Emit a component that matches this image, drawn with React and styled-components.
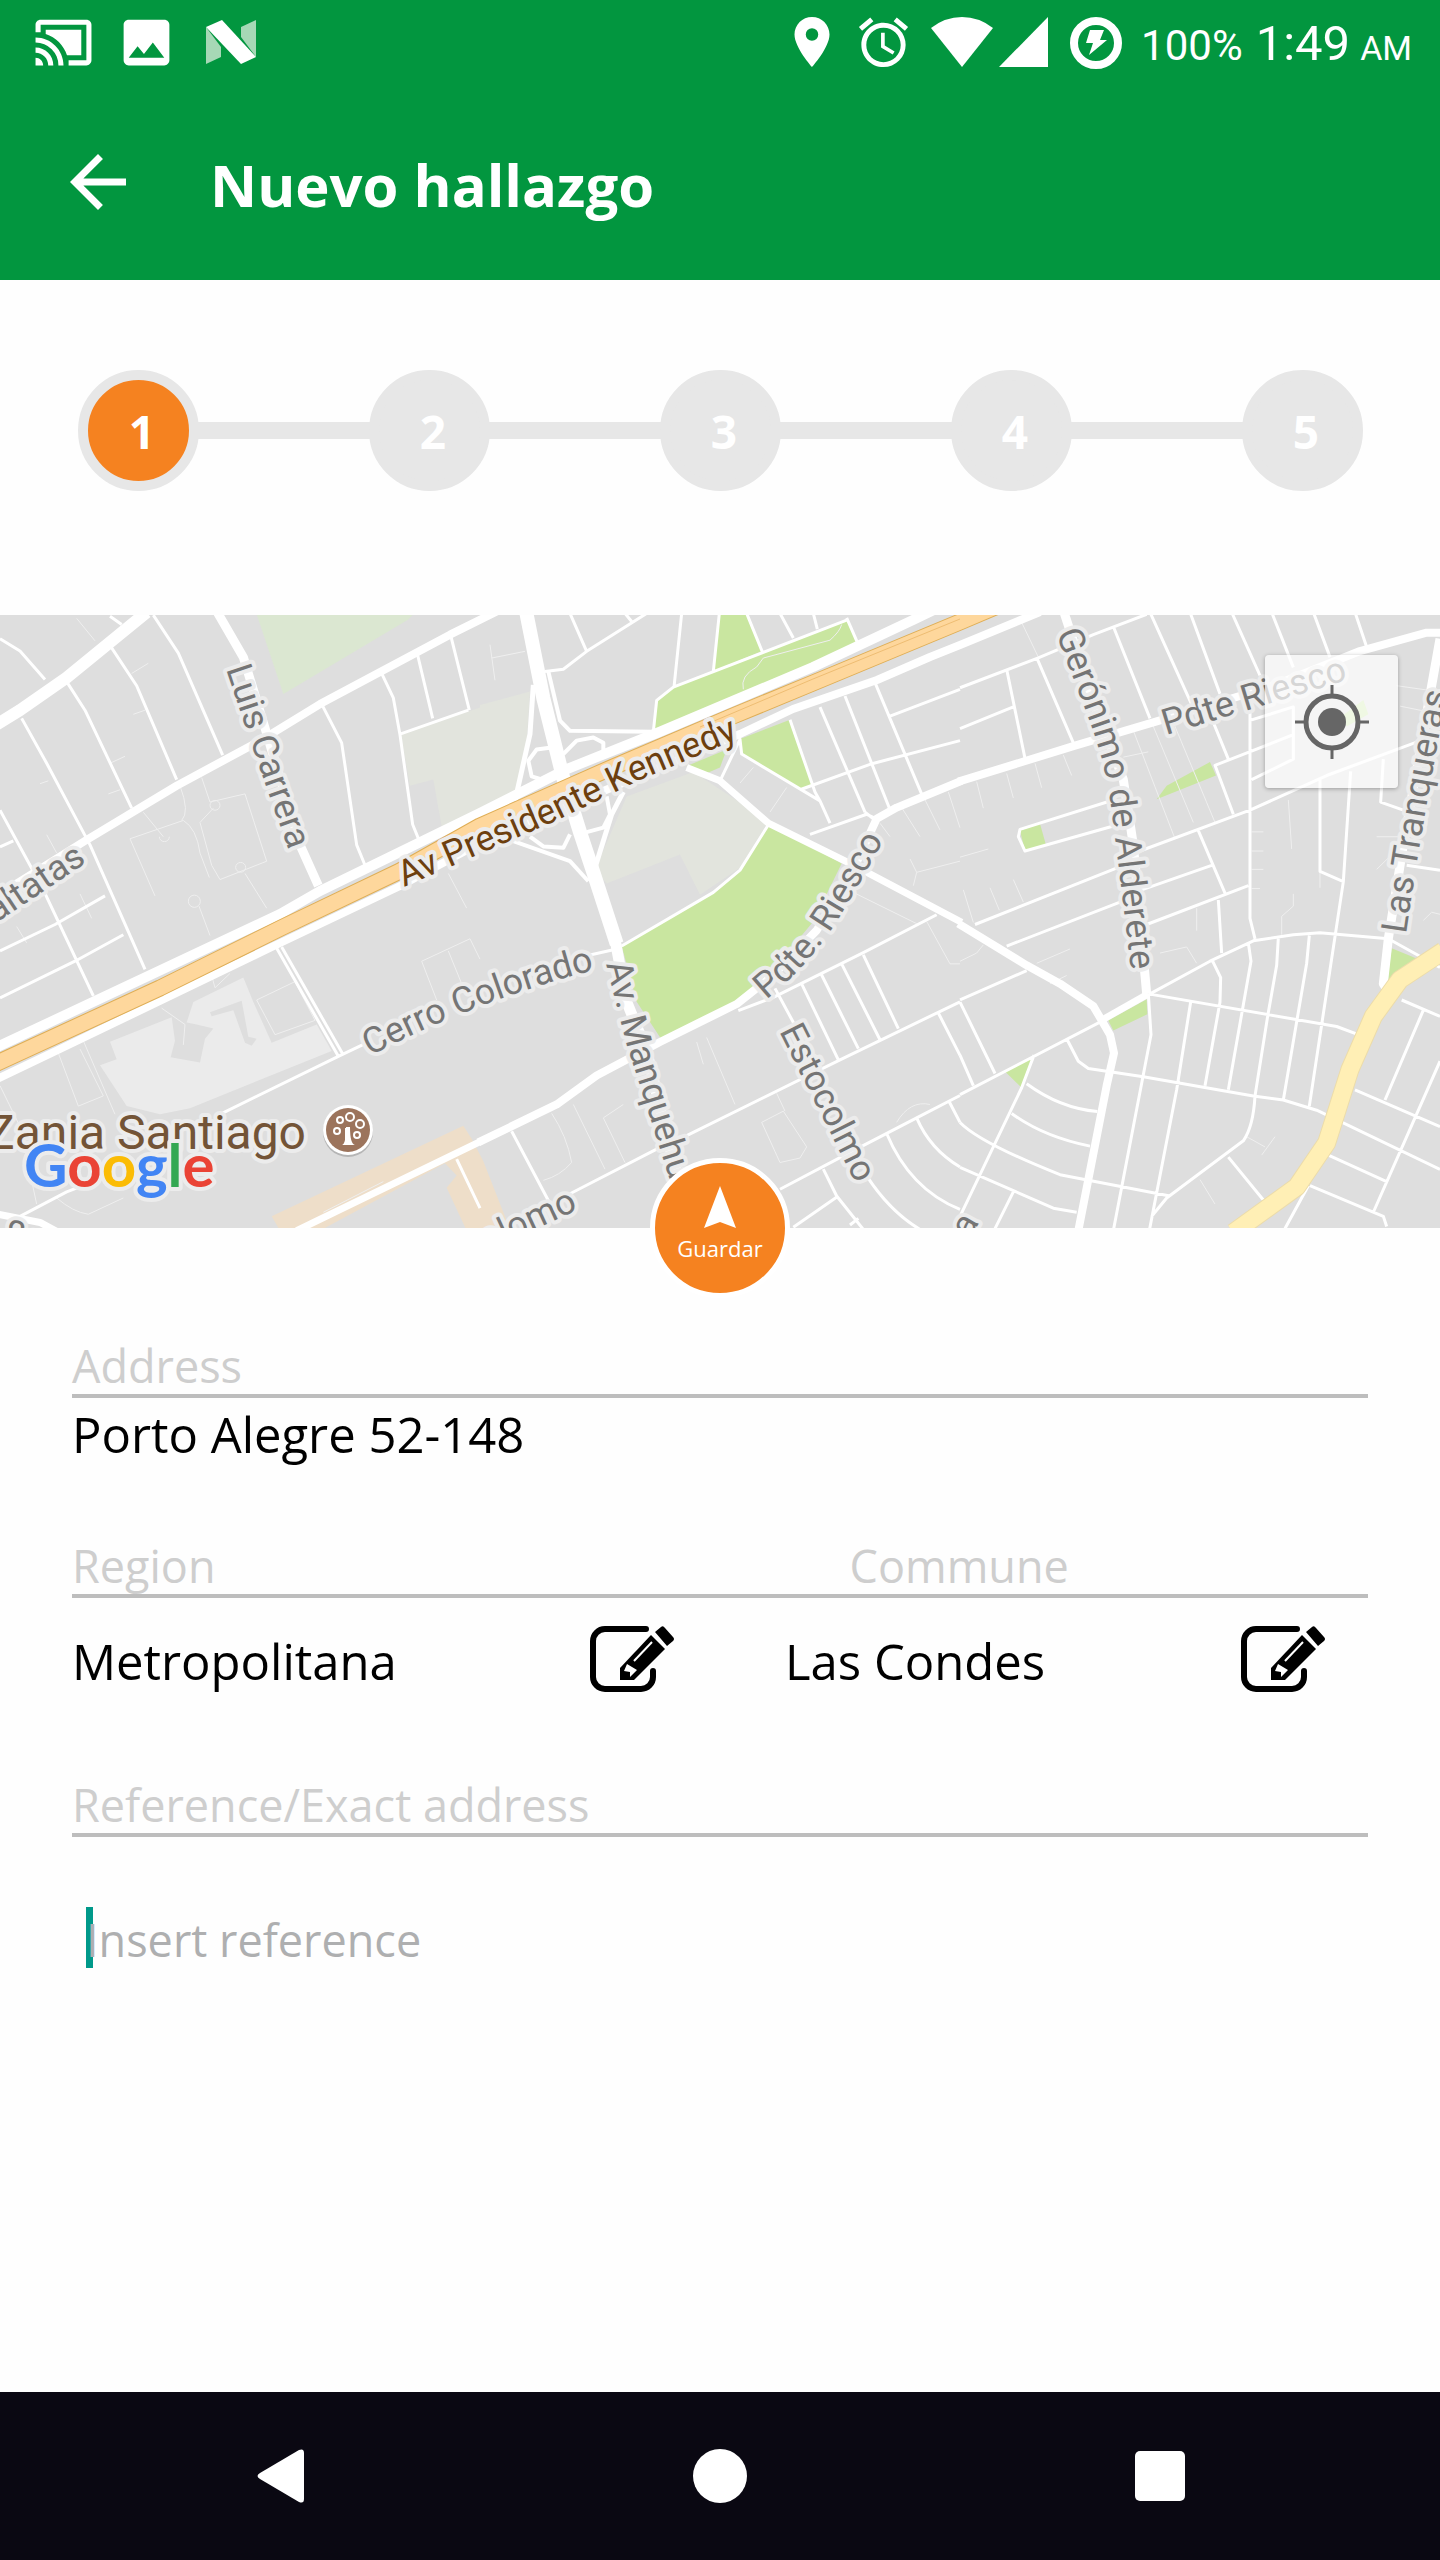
import React, { useState } from "react";
import styled, { createGlobalStyle } from "styled-components";
import {
  MdAccessAlarm,
  MdArrowBack,
  MdCastConnected,
  MdImage,
  MdLocationOn,
} from "react-icons/md";

const steps = [1, 2, 3, 4, 5];

// Every tile holds its own street coordinates, placed on the map by "transform"
const mapTiles = [
  {
    id: "west",
    transform: "translate(0 -15) scale(0.33333 0.40816)",
    areas: [
      ["#dbe7d1", "M768 30H1245L1225 48L850 230Z"],
      ["#e2e4dd", "M1202 328L1445 262V528L1325 555L1300 440L1230 455Z"],
      [
        "#ebebeb",
        "M300 1140L350 1125L330 1082L515 1022L525 1080L512 1120L600 1133L615 1075L640 1050L590 1040L560 1035L580 985L730 925L760 985L815 1085L950 1040L995 1105L570 1245L480 1260L380 1240Z",
      ],
      ["#dedede", "M630 1010L725 982L745 1070L770 1075L755 1092L735 1085L700 1005L635 1020Z"],
      [
        "#eedec9",
        "M815 1510L1390 1288L1415 1320L1450 1375L1525 1531V1545H1400L1340 1440L1370 1410L1335 1380L960 1545H840Z",
      ],
    ],
    faint:
      "M230 45L285 100M395 180L445 155M400 280L435 270M330 400L375 383M325 475L360 465M120 450L145 443M390 585L550 540Q590 560 600 620L628 680M390 585L465 725M540 455Q570 520 545 540M430 520L490 580M605 435L630 495L735 475L800 640L660 685L635 650L600 545L640 510M630 503a15 12 0 1 0 30 0a15 12 0 1 0-30 0M707 655a15 12 0 1 0 30 0a15 12 0 1 0-30 0M565 738a18 15 0 1 0 36 0a18 15 0 1 0-36 0M478 580a15 12 0 1 0 30 0M735 670L800 755M597 750L630 822M175 1110L235 1240L310 1215L240 1100M250 1080L345 1260M0 1190L60 1290L110 1480M1345 670L1400 755M1265 885L1410 830L1440 880M1265 885L1310 980M1345 860L1390 950M770 980L885 935L945 1030L825 1065ZM970 1500L1150 1425M170 1465Q220 1500 265 1505L370 1465M140 575L170 620M50 800L80 840M240 720L275 780M485 1000L555 1040L550 1090M635 920L645 950L690 915",
    minor:
      "M0 95L60 125L135 195M325 105L410 210L530 440M200 200L255 270L395 510M65 290L140 400L270 600L435 905M460 37L535 130L668 380M0 515L130 710L280 970M0 605L40 590M0 860L165 795L315 725M0 975L225 885L370 820M330 40L365 60M965 255L1025 350L1070 600L1095 650M1145 180L1180 240L1200 330L1238 550L1258 590M1202 328L1405 270M1250 125L1298 290M1350 80L1408 270M828 850L1015 1118M845 850L1030 1115M660 1260L1015 1118L1100 1085M1370 1370L1440 1490M60 1510L200 1450L280 1425",
    main: [
      [12, "M-10 305L60 270L200 190L440 30"],
      [8, "M1510 20L1350 85L960 255L780 345L530 455L255 590L0 720"],
      [9, "M652 30L730 140L790 300L900 600L955 700"],
      [7, "M890 1545L1445 1325"],
      [7, "M-5 1505L120 1525L200 1560"],
    ],
  },
  {
    id: "center",
    transform: "translate(480 -15) scale(0.33333 0.44643)",
    areas: [
      ["#c9e6a0", "M718 30H800L845 115L697 160Z"],
      ["#c9e6a0", "M530 225L580 195L1100 45L1135 100L700 240L520 290Z"],
      ["#c9e6a0", "M778 312L930 268L1000 412L960 425L785 345Z"],
      ["#c9e6a0", "M620 372L740 335L720 375L680 388Z"],
      [
        "#c9e6a0",
        "M868 500L1085 590L1000 720L900 810L780 895L545 985L470 900L425 775L700 655L780 605Z",
      ],
      ["#e2e4dd", "M0 235L150 205L140 320L105 440L0 470Z"],
      ["#e2e4dd", "M440 440L640 385L865 495L780 600L660 660L600 570L380 635L345 605Z"],
    ],
    faint:
      "M30 100L45 180M35 130L135 115M790 200Q780 170 830 150L850 130L1050 90Q1080 70 1085 55M780 410L820 375M870 475L920 420M1265 465L1320 530M1330 440L1380 515M1405 430L1440 510M1200 500L1230 530M1290 580L1310 610L1440 585M1310 610L1300 640M1120 655L1310 725M1340 720L1410 815H1440M650 990L670 1040M680 980L765 1130M845 1170L910 1145L980 1225L960 1250L900 1260ZM370 1160L430 1130M370 1160L435 1260M215 1150Q260 1200 275 1260Q240 1290 190 1300M280 1130L375 1275M890 1105L915 1145M1250 1170Q1290 1120 1350 1130",
    minor:
      "M700 160L718 30M582 195L605 30M520 295L530 225L580 195L1100 45M1100 40L1135 100M800 30L848 118M900 30L940 85M1000 30L1012 65M195 160L250 155L320 115L500 30M270 30L320 115M435 30L455 48M425 775L700 655L780 605L868 500M720 405L780 312L785 345L1020 450L1050 500M930 268L1005 430L1020 450M960 425L1170 368L1440 315M1020 240L1155 475M1095 215L1230 470M1185 185L1325 435M1230 260L1440 200M990 525L1160 480L1190 490M1155 475L1180 490M330 795L420 780M775 920L880 890L1150 790L1370 705M885 870L950 960M965 860L1075 1030M1025 840L1135 1005M1085 815L1200 985M1150 795L1255 960M620 1200L1080 1030L1440 900M1375 925L1440 1020M900 1320L1090 1245L1310 1160L1440 1110M95 1190L205 1345M270 1330L530 1230M1310 1160Q1350 1230 1440 1270M1220 1195Q1290 1320 1440 1365M1160 1290Q1230 1370 1320 1410M1030 1275L1070 1335L1150 1410M940 1405L1075 1335M1110 1400L1135 1385M1405 1120L1440 1170",
    main: [
      [5, "M160 190L150 300L105 450"],
      [4, "M205 160L240 270L270 293L520 295"],
      [4, "M250 345L290 315L340 308L370 320L370 345L340 360L280 375"],
      [4, "M220 330L170 335L145 360L155 395L200 405"],
      [5, "M430 430L395 480L345 600"],
      [4, "M380 440L390 480L370 510L320 520"],
      [4, "M150 530L190 552L250 555L270 525"],
      [4, "M100 540L270 585L325 630"],
      [14, "M138 25L190 220L250 400L300 520L340 610L410 770"],
      [11, "M405 760L440 900L500 1010L560 1200L600 1310"],
      [
        8,
        "M-5 1215L230 1130L350 1065L540 990L770 905L880 840L1010 740L1110 620L1190 490L1250 465L1445 405",
      ],
      [7, "M620 375L720 405L865 500L1110 590L1445 722"],
    ],
  },
  {
    id: "east",
    transform: "translate(960 -15) scale(0.33333 0.40816)",
    areas: [
      ["#c9e6a0", "M180 565L240 548L258 600L195 615Z"],
      ["#c9e6a0", "M590 488L620 455L750 397L768 430Z"],
      ["#c9e6a0", "M445 1030L560 978L562 1015L460 1055Z"],
      ["#c9e6a0", "M135 1155L220 1118L185 1195Z"],
      ["#c9e6a0", "M1295 853L1390 885L1295 955L1283 930Z"],
      ["#c9e6a0", "M1145 285L1210 245L1225 280L1160 310Z"],
    ],
    faint:
      "M185 55L235 140M50 445L70 510M140 425L160 485M225 400L245 460M310 380L335 430M490 385L565 372M520 320L645 585M575 300L700 545M0 630L85 610M10 710L40 790M90 705L118 760M160 685L190 740M985 490L995 610M875 568H910M875 615H910M875 660H910M875 707H900M1000 720V750L965 775V820M1080 665V705M600 865L680 850L710 890M230 890L330 855M270 940L320 920M710 755V810M1250 580H1320M1250 660L1300 620M860 1315L915 1340M945 1315L905 1360M720 1420L765 1480M1310 210L1440 225M1320 260L1440 280M1390 785L1415 765L1440 770M0 885L50 865L70 845M640 300L765 545",
    minor:
      "M0 215L235 142L400 85L560 35M0 315L160 262M140 170L195 388M232 145L340 350M460 65L570 290M570 30L700 265M690 30L780 230M750 280L805 390M815 30L900 185M935 30L1000 165M1060 30L1110 140M1185 30L1220 115M460 490L180 562L175 580L195 615L455 555M45 795L475 655M540 615L870 515L1100 430L1380 345M140 848L480 740M545 710L755 650M560 795L865 700M715 565L795 718M870 250V780L885 830M820 525L765 405L1000 330M870 295L1000 262V390L875 440M1080 440V665L1150 690M1172 420L1150 690L1048 1240M1270 390L1262 495L1330 515M1340 650L1440 662M0 980L200 908M570 965L750 885L880 835L1000 820L1080 815L1285 830L1440 900M565 965L1130 1045L1205 1068M565 965L573 1065L460 1545M692 985L650 1200L568 1545M775 735L785 865M755 880L782 925L780 985L735 1190M865 840L873 885L805 1200M955 828L950 895L923 1020L885 1215Q880 1290 850 1325L620 1465L575 1510M1048 822L1040 890L970 1225M320 1075L355 1130L385 1148L550 1168L880 1215L970 1225L1070 1250L1440 1395M0 1212L430 1030M0 985L105 1160M0 1115L40 1190M222 1115L185 1195L0 1510M200 1185Q300 1245 412 1253M155 1258Q250 1315 390 1338M0 1280Q60 1330 300 1408L630 1460M0 1390L280 1490L350 1500M160 1450L105 1540M1185 1200L1440 1290M1325 980L1440 1020M1390 1005L1275 1225M1440 1130L1240 1500M1105 1360L1280 1425M1050 1435L1270 1510L1280 1535M1045 1435L975 1540M805 1365L915 1475",
    main: [
      [8, "M-5 445L340 358L600 295L940 210L1200 125L1400 80H1445"],
      [9, "M310 25L400 250L490 440L520 600L560 965"],
      [8, "M-5 793L200 895L300 940L400 995L450 1065L462 1110L440 1190L355 1545"],
      [7, "M430 1027L565 965"],
      [9, "M1440 95L1330 600L1285 830L1270 940L1290 965"],
    ],
  },
];

const highway =
  "M-5 449L160 373L283 312L400 256L480 211L613 152L733 101L813 68L960 7L1000 -10";

// Street names follow these baselines
const streetLabels = [
  { id: "carrera", name: "Luis Carrera", d: "M226 54L256 143L294 250" },
  { id: "altatas", name: "altatas", d: "M-4 308L110 232" },
  { id: "colorado", name: "Cerro Colorado", d: "M370 441Q480 383 610 351" },
  { id: "manquehue", name: "Av. Manquehu", d: "M606 349L626 427L653 512L683 607" },
  { id: "pdteriesco", name: "Pdte. Riesco", d: "M766 385Q812 348 842 298T895 203" },
  { id: "estocolmo", name: "Estocolmo", d: "M779 416L860 577" },
  { id: "geronimo", name: "Gerónimo de Alderete", d: "M1056 18C1077 77 1104 130 1111 192Q1120 260 1134 380" },
  { id: "riesco", name: "Pdte Riesco", d: "M1166 120L1370 58" },
  { id: "tranqueras", name: "Las Tranqueras", d: "M1406 319Q1423 200 1453 50" },
  { id: "colomo", name: "olomo", d: "M486 637L612 579" },
  { id: "corner", name: "8a", d: "M2 628L92 652" },
  { id: "east-a", name: "a", d: "M970 624L988 592" },
];

const EditIcon = () => (
  <svg width="84" height="66" viewBox="0 0 84 66" aria-hidden="true">
    <path
      d="M56 3H15A12 12 0 0 0 3 15V51A12 12 0 0 0 15 63H51A12 12 0 0 0 63 51V45"
      fill="none"
      stroke="#000"
      strokeWidth="6"
      strokeLinecap="round"
    />
    <path d="M71 1Q73 -1 75 2L83 11Q85 13 83 15L77 20L65 6Z" />
    <path d="M61 9L75 23L44 54H30V42Z" />
    <path d="M62 16L44 35" stroke="#fff" strokeWidth="2" />
    <path d="M37 38L47 44L40 51V46L34 45Z" fill="#fff" />
  </svg>
);

const CityMap = () => (
  <MapDrawing viewBox="0 0 1440 613" preserveAspectRatio="xMidYMid slice">
    <rect width="1440" height="613" fill="#dedede" />
    {mapTiles.map((tile) => (
      <g key={tile.id} transform={tile.transform}>
        {tile.areas.map(([color, d]) => (
          <path key={d} d={d} fill={color} />
        ))}
      </g>
    ))}
    {mapTiles.map((tile) => (
      <g key={tile.id} transform={tile.transform}>
        <Street d={tile.faint} $width={1} $color="#efefef" />
        <Street d={tile.minor} $width={3} />
        {tile.main.map(([width, d]) => (
          <Street key={d} d={d} $width={width} />
        ))}
      </g>
    ))}
    <Street
      d="M-5 433L280 299L320 276L480 198L567 154L657 118L813 52L913 5L940 -8"
      $width={10}
    />
    <Street
      d="M-5 465L60 434L280 328L400 271L480 228L613 172L740 119L793 94L877 65L930 42L960 30L1040 -3"
      $width={8}
    />
    <Street d={highway} $width={17} $color="#dfae55" />
    <Street d={highway} $width={15} $color="#fed79c" />
    <Street d="M700 112L813 64L960 4" $width={1} $color="#eebd73" />
    <g transform="translate(960 -15) scale(0.33333 0.40816)">
      <Street
        d="M820 1550L1010 1438L1100 1330L1170 1150L1240 1020L1320 930L1450 860"
        $width={19}
        $color="#ecdcaa"
      />
      <Street
        d="M820 1550L1010 1438L1100 1330L1170 1150L1240 1020L1320 930L1450 860"
        $width={17}
        $color="#ffefb5"
      />
    </g>
    {streetLabels.map(({ id, name, d }) => (
      <React.Fragment key={id}>
        <path id={id} d={d} fill="none" />
        <StreetName>
          <textPath href={`#${id}`}>{name}</textPath>
        </StreetName>
      </React.Fragment>
    ))}
    <path id="kennedy" d="M404 272L560 204L640 165L785 104" fill="none" />
    <StreetName $color="#6d3f0e">
      <textPath href="#kennedy">Av Presidente Kennedy</textPath>
    </StreetName>
    <PlaceName x="-14" y="534">
      Zania Santiago
    </PlaceName>
    <circle cx="348" cy="517" r="25" fill="#b5b5b5" />
    <circle cx="348" cy="515" r="25" fill="#fff" />
    <circle cx="348" cy="515" r="22" fill="#9c745c" />
    <g fill="none" stroke="#fff" strokeWidth="2">
      <circle cx="337" cy="516" r="3" />
      <circle cx="340" cy="505" r="3" />
      <circle cx="350" cy="502" r="4" />
      <circle cx="360" cy="509" r="4" />
      <circle cx="357" cy="520" r="3" />
      <path d="M346 513V527M349 513V527" />
    </g>
    <path d="M342 530Q346 529 346 512H350Q350 529 355 530Z" fill="#fff" />
    <GoogleLogo x="24" y="572">
      <tspan fill="#4285f4">G</tspan>
      <tspan fill="#ea4335">o</tspan>
      <tspan fill="#fbbc05">o</tspan>
      <tspan fill="#4285f4">g</tspan>
      <tspan fill="#34a853">l</tspan>
      <tspan fill="#ea4335">e</tspan>
    </GoogleLogo>
  </MapDrawing>
);

const App = () => {
  const [address, setAddress] = useState("Porto Alegre 52-148");
  const [reference, setReference] = useState("");

  return (
    <Screen>
      <GlobalStyle />
      <Header>
        <StatusBar>
          <StatusGroup>
            <MdCastConnected size={61} />
            <StatusIcon $left={22}>
              <MdImage size={61} />
            </StatusIcon>
            <StatusIcon $left={29}>
              <svg width="50" height="44" viewBox="0 0 50 44">
                <path d="M0 7L15 27V37L0 44Z" fill="#a6d8b6" />
                <path d="M50 0V37L35 17V7Z" fill="#a6d8b6" />
                <path d="M0 7L16 0L50 37L35 44Z" fill="#fff" />
              </svg>
            </StatusIcon>
          </StatusGroup>
          <StatusGroup>
            <MdLocationOn size={60} />
            <StatusIcon $left={12}>
              <MdAccessAlarm size={59} />
            </StatusIcon>
            <StatusIcon $left={18}>
              <svg width="117" height="50" viewBox="0 0 117 50">
                <path d="M0 11Q14 0 31 0T62 11L31 50Z" fill="#fff" />
                <path d="M117 0V50H68Z" fill="#fff" />
              </svg>
            </StatusIcon>
            <StatusIcon $left={21}>
              <svg width="53" height="53" viewBox="0 0 53 53">
                <circle cx="27" cy="27" r="22" fill="none" stroke="#fff" strokeWidth="8" />
                <path d="M21 14H35L31 24H38L20 39L24 27H17Z" fill="#fff" />
              </svg>
            </StatusIcon>
            <StatusText $size={42} $left={19}>
              100%
            </StatusText>
            <StatusText $size={49} $left={13}>
              1:49
            </StatusText>
            <StatusText $size={34} $left={10}>
              AM
            </StatusText>
          </StatusGroup>
        </StatusBar>
        <TitleBar>
          <BackButton type="button" aria-label="Volver">
            <MdArrowBack size={84} />
          </BackButton>
          <Title>Nuevo hallazgo</Title>
        </TitleBar>
      </Header>

      <Stepper>
        {steps.map((step) => (
          <React.Fragment key={step}>
            {step > 1 && <StepLine aria-hidden="true" />}
            <Step $active={step === 1} aria-current={step === 1 ? "step" : undefined}>
              {step}
            </Step>
          </React.Fragment>
        ))}
      </Stepper>

      <MapSection>
        <CityMap />
        <LocateButton type="button" aria-label="Mi ubicación">
          <svg width="74" height="74" viewBox="0 0 74 74" fill="none" stroke="#666">
            <circle cx="37" cy="37" r="26" strokeWidth="5" />
            <circle cx="37" cy="37" r="14" fill="#666" stroke="none" />
            <path d="M37 0V12M37 62V74M0 37H12M62 37H74" strokeWidth="3" />
          </svg>
        </LocateButton>
        <SaveButton type="button">
          <svg width="32" height="42" viewBox="0 0 32 42" aria-hidden="true">
            <path d="M16 0L32 42L16 36L0 42Z" fill="#fff" />
          </svg>
          Guardar
        </SaveButton>
      </MapSection>

      <Form>
        <LabelRow>
          <Label htmlFor="address">Address</Label>
        </LabelRow>
        <AddressInput
          id="address"
          value={address}
          onChange={(e) => setAddress(e.target.value)}
        />

        <LabelRow $top={75} $split>
          <Label as="span" id="region">
            Region
          </Label>
          <Label as="span" id="commune">
            Commune
          </Label>
        </LabelRow>
        <PlaceRow>
          <Value aria-labelledby="region">Metropolitana</Value>
          <EditButton type="button" aria-label="Editar region">
            <EditIcon />
          </EditButton>
          <Value aria-labelledby="commune">Las Condes</Value>
          <EditButton type="button" aria-label="Editar comuna">
            <EditIcon />
          </EditButton>
        </PlaceRow>

        <LabelRow $top={85}>
          <Label htmlFor="reference">Reference/Exact address</Label>
        </LabelRow>
        <ReferenceBox>
          <ReferenceInput
            id="reference"
            placeholder="Insert reference"
            value={reference}
            onChange={(e) => setReference(e.target.value)}
          />
        </ReferenceBox>
      </Form>

      <NavBar>
        <NavButton type="button" aria-label="Atrás">
          <svg width="47" height="54" viewBox="0 0 47 54">
            <path d="M3 24L42 1Q47 -1 47 4V50Q47 55 42 53L3 30Q-2 27 3 24Z" fill="#fff" />
          </svg>
        </NavButton>
        <NavButton type="button" aria-label="Inicio">
          <svg width="54" height="54" viewBox="0 0 54 54">
            <circle cx="27" cy="27" r="27" fill="#fff" />
          </svg>
        </NavButton>
        <NavButton type="button" aria-label="Recientes">
          <svg width="50" height="50" viewBox="0 0 50 50">
            <rect width="50" height="50" rx="5" fill="#fff" />
          </svg>
        </NavButton>
      </NavBar>
    </Screen>
  );
};

const GlobalStyle = createGlobalStyle`
  * {
    box-sizing: border-box;
  }

  body {
    margin: 0;
    background: #fefefe;
    font-family: "Open Sans", sans-serif;
  }

  button,
  input {
    margin: 0;
    padding: 0;
    border: 0;
    background: none;
    font-family: inherit;
  }

  svg {
    display: block;
  }
`;

const Screen = styled.div`
  display: flex;
  flex-direction: column;
  min-height: 100vh;
  background: #fefefe;
`;

const Header = styled.header`
  height: 280px;
  background: #02963f;
  color: #fff;
`;

const StatusBar = styled.div`
  display: flex;
  justify-content: space-between;
  height: 84px;
  padding: 0 28px 0 33px;
`;

const StatusGroup = styled.div`
  display: flex;
  align-items: center;
`;

const StatusIcon = styled.span`
  margin-left: ${({ $left }) => $left}px;
`;

const StatusText = styled.span`
  margin-left: ${({ $left }) => $left}px;
  align-self: baseline;
  font-family: Roboto, sans-serif;
  font-size: ${({ $size }) => $size}px;
  line-height: 88px;
`;

const TitleBar = styled.div`
  display: flex;
  align-items: center;
  height: 196px;
  padding-left: 56px;
`;

const BackButton = styled.button`
  color: #fff;
`;

const Title = styled.h1`
  margin: 0 0 0 70px;
  padding-top: 6px;
  font-size: 58px;
  line-height: 80px;
  font-weight: 700;
`;

const Stepper = styled.div`
  display: flex;
  align-items: center;
  padding: 90px 77px 124px 78px;
`;

const Step = styled.span`
  display: flex;
  align-items: center;
  justify-content: center;
  width: 121px;
  height: 121px;
  padding-left: 7px;
  border: 10px solid #e7e7e7;
  border-radius: 50%;
  background: ${({ $active }) => ($active ? "#f58220" : "#e7e7e7")};
  color: #fff;
  font-size: 46px;
  line-height: 60px;
  font-weight: 700;
`;

const StepLine = styled.span`
  flex: 1;
  height: 17px;
  margin: 0 -2px;
  background: #e7e7e7;
`;

const MapSection = styled.section`
  position: relative;
  height: 613px;
`;

const MapDrawing = styled.svg`
  width: 100%;
  height: 100%;
`;

const Street = styled.path`
  fill: none;
  stroke: ${({ $color }) => $color || "#fff"};
  stroke-width: ${({ $width }) => $width}px;
  stroke-linejoin: round;
  vector-effect: non-scaling-stroke;
`;

const MapText = styled.text`
  font-family: Roboto, sans-serif;
  paint-order: stroke;
  stroke: #ececec;
  stroke-width: 8px;
  stroke-linejoin: round;
`;

const StreetName = styled(MapText)`
  fill: ${({ $color }) => $color || "#757575"};
  font-size: 36px;
`;

const PlaceName = styled(MapText)`
  fill: #735437;
  font-size: 48px;
`;

const GoogleLogo = styled(MapText)`
  font-family: Lato, sans-serif;
  font-size: 60px;
  font-weight: 700;
`;

const LocateButton = styled.button`
  position: absolute;
  top: 40px;
  right: 42px;
  display: flex;
  align-items: center;
  justify-content: center;
  width: 133px;
  height: 133px;
  border-radius: 4px;
  background: rgba(255, 255, 255, 0.7);
  box-shadow: 0 1px 4px rgba(0, 0, 0, 0.3);
`;

const SaveButton = styled.button`
  position: absolute;
  bottom: -70px;
  left: 50%;
  display: flex;
  flex-direction: column;
  align-items: center;
  width: 140px;
  height: 140px;
  margin-left: -70px;
  padding-top: 23px;
  border: 5px solid #fff;
  border-radius: 50%;
  background: #f58220;
  color: #fff;
  font-size: 22px;
  line-height: 40px;
`;

const Form = styled.form`
  flex: 1;
  padding: 110px 72px 0;
`;

const LabelRow = styled.div`
  display: grid;
  grid-template-columns: ${({ $split }) => ($split ? "60% 40%" : "100%")};
  margin-top: ${({ $top }) => $top || 0}px;
  border-bottom: 4px solid #bdbdbd;
`;

const Label = styled.label`
  color: #cecece;
  font-size: 45px;
  line-height: 56px;
`;

const AddressInput = styled.input`
  display: block;
  width: 100%;
  height: 62px;
  margin: 5px 0 -2px;
  color: #000;
  font-size: 49px;
  line-height: 62px;
`;

const PlaceRow = styled.div`
  display: grid;
  grid-template-columns: 518fr 195fr 456fr 127fr;
  align-items: center;
  padding-top: 28px;
`;

const Value = styled.span`
  padding-top: 4px;
  color: #000;
  font-size: 49px;
  line-height: 62px;
`;

const EditButton = styled.button`
  width: 84px;
  height: 66px;
`;

const ReferenceBox = styled.div`
  position: relative;
  margin: 70px 14px 0;

  /* text cursor */
  &::before {
    content: "";
    position: absolute;
    top: 0;
    left: 0;
    width: 7px;
    height: 61px;
    background: #00998a;
  }
`;

const ReferenceInput = styled.input`
  position: relative;
  display: block;
  width: 100%;
  height: 66px;
  font-size: 45px;
  line-height: 66px;

  &::placeholder {
    color: #aeafb0;
    opacity: 1;
  }
`;

const NavBar = styled.nav`
  display: grid;
  grid-template-columns: repeat(3, 1fr);
  height: 168px;
  padding: 0 60px;
  background: #0a0812;
`;

const NavButton = styled.button`
  display: flex;
  align-items: center;
  justify-content: center;
`;

export default App;
